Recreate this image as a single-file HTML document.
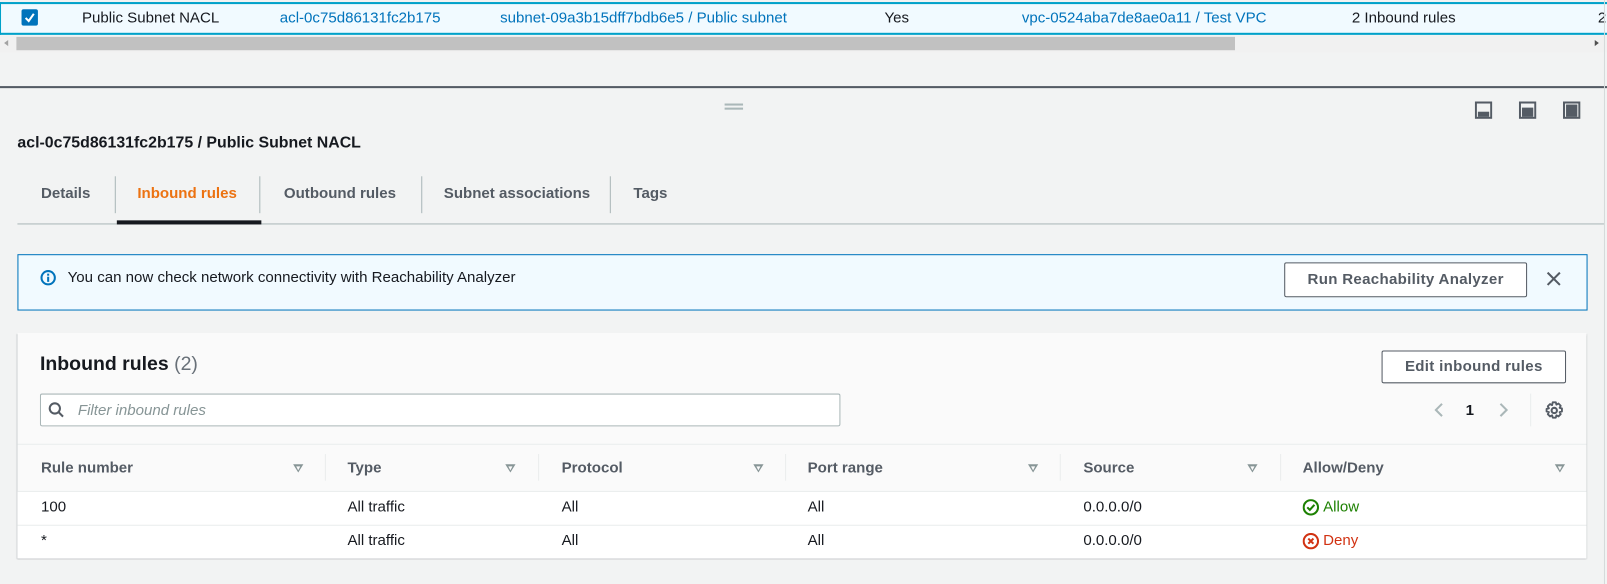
<!DOCTYPE html>
<html><head><meta charset="utf-8">
<style>
*{box-sizing:border-box;margin:0;padding:0}
body{width:1607px;height:570px;background:#f2f3f3;overflow:hidden;margin:0}
#w{position:absolute;left:0;top:0;width:1568px;height:557px;transform:scale(1.0249);transform-origin:0 0;font-family:"Liberation Sans",sans-serif;font-size:14.7px;line-height:19px;color:#16191f}
.a{position:absolute;white-space:nowrap}
.lk{color:#0073bb}
.b{font-weight:bold}
.sep{position:absolute;width:1px;background:#d5dbdb}
.arr{position:absolute;width:0;height:0;border-left:5px solid transparent;border-right:5px solid transparent;border-top:8px solid #879596}
.arr:after{content:"";position:absolute;left:-2.5px;top:-6.5px;border-left:2.5px solid transparent;border-right:2.5px solid transparent;border-top:4px solid #fafafa}
.btn{position:absolute;border:1px solid #545b64;border-radius:2px;background:#fff;font-weight:bold;color:#545b64;text-align:center;letter-spacing:.3px}
</style></head><body><div id="w">
<!-- top row -->
<div class="a" style="left:0;top:2px;width:1568px;height:32px;background:#f1faff;border-top:2px solid #00a1c9;border-bottom:2px solid #00a1c9;border-left:1px solid #00a1c9"></div>
<div class="a" style="left:21px;top:9px;width:16px;height:16px;background:#0073bb;border-radius:2px"><svg width="16" height="16"><path d="M4 8.5l3 3 5-7" stroke="#fff" stroke-width="2" fill="none"/></svg></div>
<div class="a" style="left:80px;top:9px">Public Subnet NACL</div>
<div class="a lk" style="left:273px;top:9px">acl-0c75d86131fc2b175</div>
<div class="a lk" style="left:488px;top:9px">subnet-09a3b15dff7bdb6e5 / Public subnet</div>
<div class="a" style="left:863px;top:9px">Yes</div>
<div class="a lk" style="left:997px;top:9px">vpc-0524aba7de8ae0a11 / Test VPC</div>
<div class="a" style="left:1319px;top:9px">2 Inbound rules</div>
<div class="a" style="left:1559px;top:9px">2</div>
<!-- scrollbar -->
<div class="a" style="left:0;top:35px;width:1568px;height:16px;background:#f1f1f1"></div>
<div class="a" style="left:16px;top:36px;width:1189px;height:13px;background:#c1c1c1"></div>
<div class="a" style="left:4px;top:39px;border-right:4px solid #a3a3a3;border-top:3px solid transparent;border-bottom:3px solid transparent"></div>
<div class="a" style="left:1556px;top:39px;border-left:4px solid #505050;border-top:3px solid transparent;border-bottom:3px solid transparent"></div>
<div class="a" style="left:0;top:84px;width:1568px;height:2px;background:#545b64"></div>
<div class="a" style="left:1565px;top:0;width:1px;height:570px;background:#d5dbdb"></div>
<!-- drag handle -->
<div class="a" style="left:707px;top:101px;width:18px;height:2px;background:#aab7b8"></div>
<div class="a" style="left:707px;top:105px;width:18px;height:2px;background:#aab7b8"></div>
<!-- panel icons -->
<svg class="a" style="left:1439px;top:99px" width="17" height="17"><rect x="1" y="1" width="15" height="15" fill="none" stroke="#545b64" stroke-width="2"/><rect x="3" y="10" width="11" height="5" fill="#545b64"/></svg>
<svg class="a" style="left:1482px;top:99px" width="17" height="17"><rect x="1" y="1" width="15" height="15" fill="none" stroke="#545b64" stroke-width="2"/><rect x="3" y="6" width="11" height="9" fill="#545b64"/></svg>
<svg class="a" style="left:1525px;top:99px" width="17" height="17"><rect x="1" y="1" width="15" height="15" fill="none" stroke="#545b64" stroke-width="2"/><rect x="3" y="3" width="11" height="12" fill="#545b64"/></svg>
<!-- heading -->
<div class="a b" style="left:17px;top:130px;font-size:15.5px">acl-0c75d86131fc2b175 / Public Subnet NACL</div>
<!-- tabs -->
<div class="a b" style="left:40px;top:180px;color:#545b64">Details</div>
<div class="a b" style="left:134px;top:180px;color:#ec7211">Inbound rules</div>
<div class="a b" style="left:277px;top:180px;color:#545b64">Outbound rules</div>
<div class="a b" style="left:433px;top:180px;color:#545b64">Subnet associations</div>
<div class="a b" style="left:618px;top:180px;color:#545b64">Tags</div>
<div class="sep" style="left:112px;top:172px;height:36px;background:#aab7b8"></div>
<div class="sep" style="left:253px;top:172px;height:36px;background:#aab7b8"></div>
<div class="sep" style="left:411px;top:172px;height:36px;background:#aab7b8"></div>
<div class="sep" style="left:595px;top:172px;height:36px;background:#aab7b8"></div>
<div class="a" style="left:17px;top:218px;width:1548px;height:1px;background:#aab7b8"></div>
<div class="a" style="left:114px;top:215px;width:141px;height:4px;background:#16191f"></div>
<!-- alert -->
<div class="a" style="left:17px;top:248px;width:1532px;height:55px;background:#f1faff;border:1px solid #0073bb"></div>
<svg class="a" style="left:39px;top:263px" width="16" height="16"><circle cx="8" cy="8" r="6.5" fill="none" stroke="#0073bb" stroke-width="2"/><rect x="7" y="7" width="2" height="5" fill="#0073bb"/><rect x="7" y="4" width="2" height="2" fill="#0073bb"/></svg>
<div class="a" style="left:66px;top:262px">You can now check network connectivity with Reachability Analyzer</div>
<div class="btn" style="left:1253px;top:256px;width:237px;height:34px;line-height:32px">Run Reachability Analyzer</div>
<svg class="a" style="left:1508px;top:264px" width="16" height="16"><path d="M2 2L14 14M14 2L2 14" stroke="#545b64" stroke-width="2"/></svg>
<!-- container -->
<div class="a" style="left:17px;top:325px;width:1531px;height:220px;background:#fafafa;box-shadow:0 1px 1px 0 rgba(0,28,36,.3),1px 1px 1px 0 rgba(0,28,36,.15),-1px 1px 1px 0 rgba(0,28,36,.15)"></div>
<div class="a b" style="left:39px;top:345px;font-size:19px;line-height:22px">Inbound rules <span style="font-weight:normal;color:#687078">(2)</span></div>
<div class="btn" style="left:1348px;top:342px;width:180px;height:32px;line-height:30px">Edit inbound rules</div>
<div class="a" style="left:39px;top:384px;width:781px;height:32px;background:#fff;border:1px solid #aab7b8;border-radius:2px"></div>
<svg class="a" style="left:47px;top:392px" width="16" height="16"><circle cx="6.5" cy="6.5" r="5" fill="none" stroke="#545b64" stroke-width="2"/><path d="M10 10l4.5 4.5" stroke="#545b64" stroke-width="2"/></svg>
<div class="a" style="left:76px;top:392px;font-style:italic;color:#879596">Filter inbound rules</div>
<svg class="a" style="left:1397px;top:392px" width="14" height="16"><path d="M10 2L4 8l6 6" stroke="#aab7b8" stroke-width="2" fill="none"/></svg>
<div class="a b" style="left:1430px;top:392px">1</div>
<svg class="a" style="left:1460px;top:392px" width="14" height="16"><path d="M4 2l6 6-6 6" stroke="#aab7b8" stroke-width="2" fill="none"/></svg>
<div class="sep" style="left:1493px;top:384px;height:32px;background:#eaeded"></div>
<svg class="a" style="left:1507px;top:391px" width="19" height="19"><circle cx="9.5" cy="9.5" r="2.6" fill="none" stroke="#545b64" stroke-width="2"/><path d="M8 1.5h3l.6 2.3 2-1.1 2.2 2.2-1.1 2 2.3.6v3l-2.3.6 1.1 2-2.2 2.2-2-1.1-.6 2.3H8l-.6-2.3-2 1.1-2.2-2.2 1.1-2-2.3-.6V8l2.3-.6-1.1-2 2.2-2.2 2 1.1z" fill="none" stroke="#545b64" stroke-width="1.8" stroke-linejoin="round"/></svg>
<!-- table -->
<div class="a" style="left:17px;top:433px;width:1531px;height:1px;background:#eaeded"></div>
<div class="a" style="left:17px;top:479px;width:1531px;height:66px;background:#fff"></div>
<div class="a" style="left:17px;top:479px;width:1531px;height:1px;background:#eaeded"></div>
<div class="a" style="left:17px;top:512px;width:1531px;height:1px;background:#eaeded"></div>
<div class="a b" style="left:40px;top:448px;color:#545b64">Rule number</div>
<div class="a b" style="left:339px;top:448px;color:#545b64">Type</div>
<div class="a b" style="left:548px;top:448px;color:#545b64">Protocol</div>
<div class="a b" style="left:788px;top:448px;color:#545b64">Port range</div>
<div class="a b" style="left:1057px;top:448px;color:#545b64">Source</div>
<div class="a b" style="left:1271px;top:448px;color:#545b64">Allow/Deny</div>
<div class="arr" style="left:286px;top:453px"></div>
<div class="arr" style="left:493px;top:453px"></div>
<div class="arr" style="left:735px;top:453px"></div>
<div class="arr" style="left:1003px;top:453px"></div>
<div class="arr" style="left:1217px;top:453px"></div>
<div class="arr" style="left:1517px;top:453px"></div>
<div class="sep" style="left:317px;top:443px;height:26px;background:#eaeded"></div>
<div class="sep" style="left:525px;top:443px;height:26px;background:#eaeded"></div>
<div class="sep" style="left:766px;top:443px;height:26px;background:#eaeded"></div>
<div class="sep" style="left:1034px;top:443px;height:26px;background:#eaeded"></div>
<div class="sep" style="left:1249px;top:443px;height:26px;background:#eaeded"></div>
<div class="a" style="left:40px;top:486px">100</div>
<div class="a" style="left:339px;top:486px">All traffic</div>
<div class="a" style="left:548px;top:486px">All</div>
<div class="a" style="left:788px;top:486px">All</div>
<div class="a" style="left:1057px;top:486px">0.0.0.0/0</div>
<svg class="a" style="left:1271px;top:487px" width="16" height="16"><circle cx="8" cy="8" r="7" fill="none" stroke="#1d8102" stroke-width="2"/><path d="M4.5 8l2.5 2.5 4.5-5" stroke="#1d8102" stroke-width="2" fill="none"/></svg>
<div class="a" style="left:1291px;top:486px;color:#1d8102">Allow</div>
<div class="a" style="left:40px;top:519px">*</div>
<div class="a" style="left:339px;top:519px">All traffic</div>
<div class="a" style="left:548px;top:519px">All</div>
<div class="a" style="left:788px;top:519px">All</div>
<div class="a" style="left:1057px;top:519px">0.0.0.0/0</div>
<svg class="a" style="left:1271px;top:520px" width="16" height="16"><circle cx="8" cy="8" r="7" fill="none" stroke="#d13212" stroke-width="2"/><path d="M5.5 5.5l5 5M10.5 5.5l-5 5" stroke="#d13212" stroke-width="2"/></svg>
<div class="a" style="left:1291px;top:519px;color:#d13212">Deny</div>
</div></body></html>
